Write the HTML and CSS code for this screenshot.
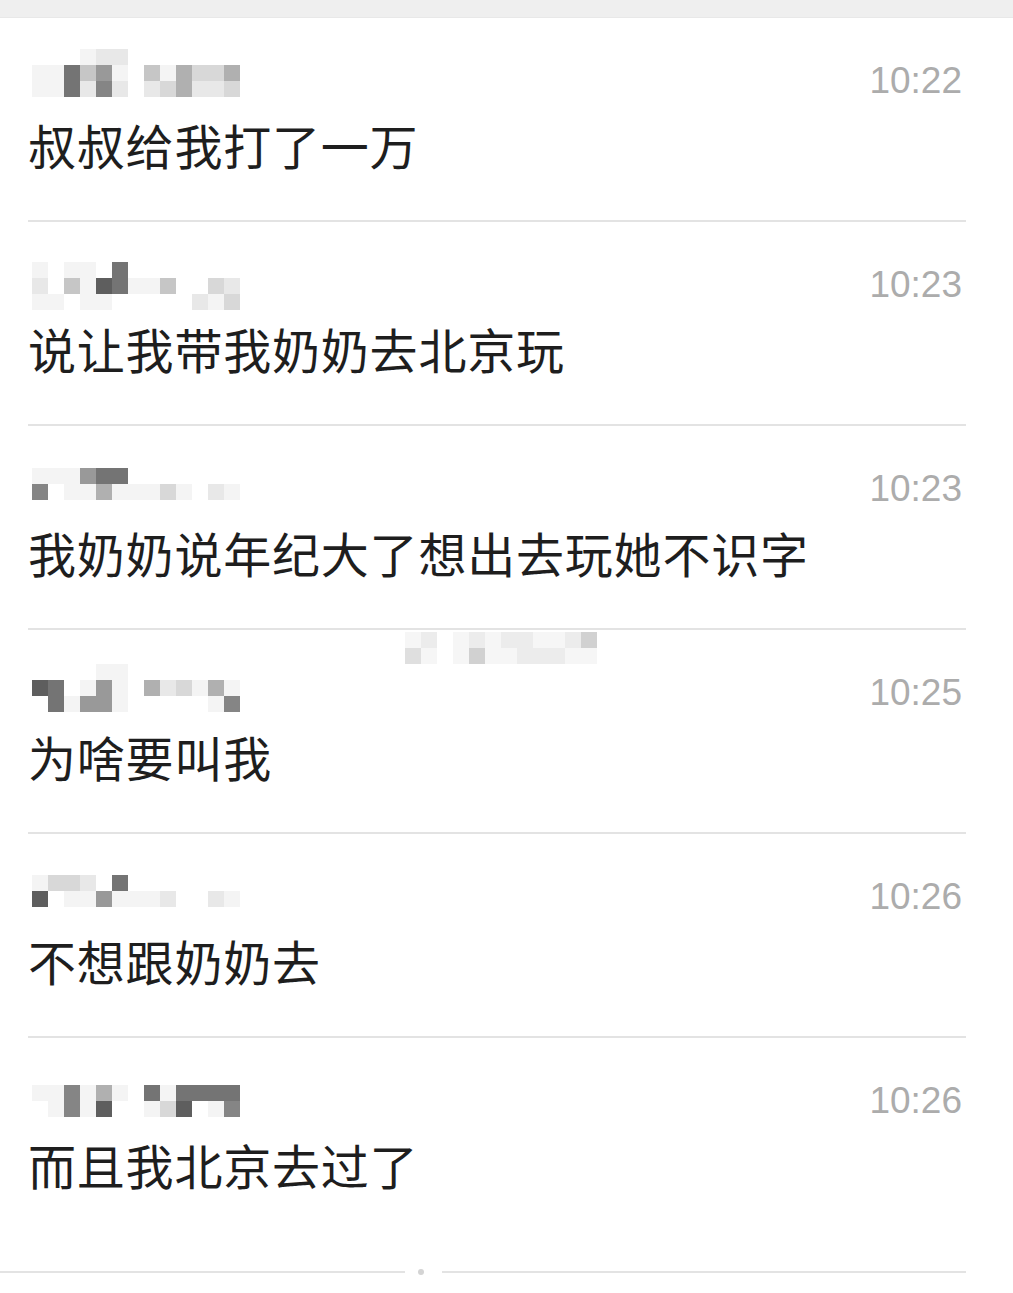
FILE: index.html
```html
<!DOCTYPE html>
<html lang="zh-CN">
<head>
<meta charset="utf-8">
<title>消息</title>
<link rel="stylesheet" href="styles.css">
</head>
<body>
<div class="topbar"></div>
<div class="page">
  <ul class="list">
    <li class="msg">
      <div class="head">
        <div class="name n1">
          <i class="c0"></i><i class="c0"></i><i class="c0"></i><i class="c1"></i><i class="c2"></i><i class="c2"></i><i class="c0"></i><i class="c0"></i><i class="c0"></i><i class="c0"></i><i class="c0"></i><i class="c0"></i><i class="c0"></i>
          <i class="c1"></i><i class="c1"></i><i class="c8"></i><i class="c4"></i><i class="c6"></i><i class="c1"></i><i class="c0"></i><i class="c4"></i><i class="c1"></i><i class="c5"></i><i class="c3"></i><i class="c3"></i><i class="c5"></i>
          <i class="c1"></i><i class="c1"></i><i class="c8"></i><i class="c2"></i><i class="c7"></i><i class="c2"></i><i class="c0"></i><i class="c2"></i><i class="c3"></i><i class="c5"></i><i class="c2"></i><i class="c2"></i><i class="c3"></i>
        </div>
        <span class="time">10:22</span>
      </div>
      <p class="text">叔叔给我打了一万</p>
    </li>
    <li class="msg">
      <div class="head">
        <div class="name n2">
          <i class="c1"></i><i class="c0"></i><i class="c1"></i><i class="c1"></i><i class="c0"></i><i class="c8"></i><i class="c0"></i><i class="c0"></i><i class="c0"></i><i class="c0"></i><i class="c0"></i><i class="c0"></i><i class="c0"></i>
          <i class="c2"></i><i class="c0"></i><i class="c4"></i><i class="c1"></i><i class="c9"></i><i class="c8"></i><i class="c1"></i><i class="c1"></i><i class="c4"></i><i class="c0"></i><i class="c0"></i><i class="c3"></i><i class="c2"></i>
          <i class="c1"></i><i class="c1"></i><i class="c0"></i><i class="c1"></i><i class="c1"></i><i class="c0"></i><i class="c0"></i><i class="c0"></i><i class="c0"></i><i class="c0"></i><i class="c2"></i><i class="c1"></i><i class="c3"></i>
        </div>
        <span class="time">10:23</span>
      </div>
      <p class="text">说让我带我奶奶去北京玩</p>
    </li>
    <li class="msg">
      <div class="head">
        <div class="name n3">
          <i class="c1"></i><i class="c1"></i><i class="c1"></i><i class="c6"></i><i class="c8"></i><i class="c8"></i><i class="c0"></i><i class="c0"></i><i class="c0"></i><i class="c0"></i><i class="c0"></i><i class="c0"></i><i class="c0"></i>
          <i class="c7"></i><i class="c0"></i><i class="c1"></i><i class="c1"></i><i class="c5"></i><i class="c1"></i><i class="c1"></i><i class="c1"></i><i class="c3"></i><i class="c1"></i><i class="c0"></i><i class="c2"></i><i class="c1"></i>
          <i class="c0"></i><i class="c0"></i><i class="c0"></i><i class="c0"></i><i class="c0"></i><i class="c0"></i><i class="c0"></i><i class="c0"></i><i class="c0"></i><i class="c0"></i><i class="c0"></i><i class="c0"></i><i class="c0"></i>
        </div>
        <span class="time">10:23</span>
      </div>
      <p class="text">我奶奶说年纪大了想出去玩她不识字</p>
    </li>
    <li class="msg">
      <div class="head">
        <div class="name n4">
          <i class="c0"></i><i class="c0"></i><i class="c0"></i><i class="c0"></i><i class="c1"></i><i class="c1"></i><i class="c0"></i><i class="c0"></i><i class="c0"></i><i class="c0"></i><i class="c0"></i><i class="c0"></i><i class="c0"></i>
          <i class="c9"></i><i class="c8"></i><i class="c0"></i><i class="c1"></i><i class="c6"></i><i class="c1"></i><i class="c0"></i><i class="c5"></i><i class="c2"></i><i class="c3"></i><i class="c1"></i><i class="c5"></i><i class="c1"></i>
          <i class="c0"></i><i class="c8"></i><i class="c1"></i><i class="c6"></i><i class="c6"></i><i class="c1"></i><i class="c0"></i><i class="c0"></i><i class="c0"></i><i class="c0"></i><i class="c0"></i><i class="c1"></i><i class="c7"></i>
        </div>
        <span class="time">10:25</span>
      </div>
      <p class="text">为啥要叫我</p>
    </li>
    <li class="msg">
      <div class="head">
        <div class="name n5">
          <i class="c1"></i><i class="c3"></i><i class="c3"></i><i class="c2"></i><i class="c0"></i><i class="c8"></i><i class="c0"></i><i class="c0"></i><i class="c0"></i><i class="c0"></i><i class="c0"></i><i class="c0"></i><i class="c0"></i>
          <i class="c9"></i><i class="c0"></i><i class="c1"></i><i class="c1"></i><i class="c6"></i><i class="c1"></i><i class="c1"></i><i class="c1"></i><i class="c2"></i><i class="c0"></i><i class="c0"></i><i class="c2"></i><i class="c1"></i>
          <i class="c0"></i><i class="c0"></i><i class="c0"></i><i class="c0"></i><i class="c0"></i><i class="c0"></i><i class="c0"></i><i class="c0"></i><i class="c0"></i><i class="c0"></i><i class="c0"></i><i class="c0"></i><i class="c0"></i>
        </div>
        <span class="time">10:26</span>
      </div>
      <p class="text">不想跟奶奶去</p>
    </li>
    <li class="msg last">
      <div class="head">
        <div class="name n6">
          <i class="c1"></i><i class="c1"></i><i class="c7"></i><i class="c1"></i><i class="c5"></i><i class="c1"></i><i class="c0"></i><i class="c8"></i><i class="c1"></i><i class="c8"></i><i class="c8"></i><i class="c8"></i><i class="c8"></i>
          <i class="c0"></i><i class="c1"></i><i class="c7"></i><i class="c1"></i><i class="c9"></i><i class="c0"></i><i class="c0"></i><i class="c1"></i><i class="c3"></i><i class="c9"></i><i class="c0"></i><i class="c1"></i><i class="c7"></i>
          <i class="c0"></i><i class="c0"></i><i class="c0"></i><i class="c0"></i><i class="c0"></i><i class="c0"></i><i class="c0"></i><i class="c0"></i><i class="c0"></i><i class="c0"></i><i class="c0"></i><i class="c0"></i><i class="c0"></i>
        </div>
        <span class="time">10:26</span>
      </div>
      <p class="text">而且我北京去过了</p>
    </li>
  </ul>
  <div class="watermark">
    <i class="c1"></i><i class="c2"></i><i class="c0"></i><i class="c1"></i><i class="c2"></i><i class="c1"></i><i class="c2"></i><i class="c2"></i><i class="c1"></i><i class="c1"></i><i class="c2"></i><i class="c4"></i>
    <i class="c3"></i><i class="c1"></i><i class="c0"></i><i class="c1"></i><i class="c4"></i><i class="c1"></i><i class="c1"></i><i class="c2"></i><i class="c2"></i><i class="c2"></i><i class="c1"></i><i class="c1"></i>
  </div>
  <div class="end">
    <span class="end-line left"></span>
    <span class="end-dot"></span>
    <span class="end-line right"></span>
  </div>
</div>
</body>
</html>
```

FILE: styles.css
```css
html, body {
  margin: 0;
  padding: 0;
  background: #ffffff;
}

body {
  font-family: "Noto Sans CJK SC", "Noto Sans", sans-serif;
  color: #222222;
}

.topbar {
  height: 17px;
  background: #efefef;
  border-bottom: 1px solid #e8e8e8;
}

.page {
  position: relative;
}

.list {
  list-style: none;
  margin: 0;
  padding: 0;
}

.msg {
  box-sizing: border-box;
  height: 204px;
  margin: 0 47px 0 28px;
  padding: 41px 4px 0 0;
  border-bottom: 2px solid #e3e3e3;
}

.msg.last {
  height: 232px;
  border-bottom: none;
}

.head {
  display: flex;
  justify-content: space-between;
  align-items: flex-start;
  height: 44px;
}

.name {
  display: grid;
  grid-template-columns: repeat(13, 16px);
  grid-auto-rows: 16px;
  margin-left: 4px;
}

.name.n1 { margin-top: -10px; }
.name.n2 { margin-top: -1px; }
.name.n3 { margin-top: 1px; }
.name.n4 { margin-top: -7px; }
.name.n5 { margin-top: 0; }
.name.n6 { margin-top: 6px; }

.name i,
.watermark i {
  display: block;
}

.c0 { background: #ffffff; }
.c1 { background: #f4f4f4; }
.c2 { background: #e8e8e8; }
.c3 { background: #d8d8d8; }
.c4 { background: #c6c6c6; }
.c5 { background: #b0b0b0; }
.c6 { background: #999999; }
.c7 { background: #858585; }
.c8 { background: #747474; }
.c9 { background: #5e5e5e; }

.time {
  font-family: "Liberation Sans", Arial, sans-serif;
  font-size: 37px;
  line-height: 44px;
  color: #acacac;
}

.text {
  margin: 12px 0 0;
  font-size: 48px;
  line-height: 58px;
  font-weight: 400;
  letter-spacing: 0.8px;
  color: #1e1e1e;
  white-space: nowrap;
}

.watermark {
  position: absolute;
  left: 405px;
  top: 614px;
  display: grid;
  grid-template-columns: repeat(12, 16px);
  grid-auto-rows: 16px;
  opacity: 0.8;
}

.end {
  display: flex;
  align-items: center;
  height: 6px;
  margin-top: -1px;
  width: 966px;
}

.end-line {
  height: 2px;
  background: #e3e3e3;
}

.end-line.left {
  width: 405px;
}

.end-line.right {
  flex: 1;
}

.end-dot {
  width: 6px;
  height: 6px;
  border-radius: 50%;
  background: #d4d4d4;
  margin: 0 18px 0 13px;
}
```
